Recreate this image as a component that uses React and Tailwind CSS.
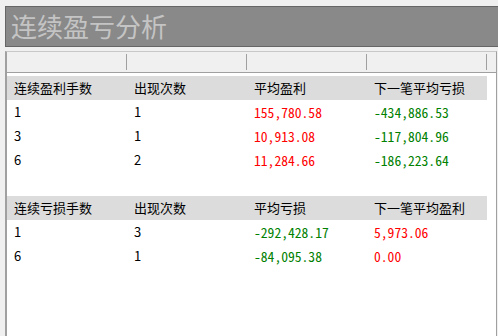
const winRows = [
  ["1", "1", "155,780.58", "-434,886.53"],
  ["3", "1", "10,913.08", "-117,804.96"],
  ["6", "2", "11,284.66", "-186,223.64"],
];

const lossRows = [
  ["1", "3", "-292,428.17", "5,973.06"],
  ["6", "1", "-84,095.38", "0.00"],
];

const cjk = "font-['Noto_Sans_CJK_SC',sans-serif]";
const mono = "font-['Noto_Sans_Mono_CJK_SC','Liberation_Mono',monospace] text-[13.6px]";

function GroupHeader({ labels }) {
  return (
    <div className="flex h-[24px] w-[480px] items-center bg-[#dcdcdc] text-[13px] text-black">
      {labels.map((l) => (
        <div key={l} className={`w-[120px] pl-[7px] ${cjk}`}>
          {l}
        </div>
      ))}
    </div>
  );
}

function Row({ cells, colors }) {
  return (
    <div className="flex h-[24px] w-[480px] items-center text-[13px]">
      {cells.map((c, i) => (
        <div key={i} className={`w-[120px] pl-[7px] ${colors[i]} ${i < 2 ? cjk : mono}`}>
          {c}
        </div>
      ))}
    </div>
  );
}

export default function App() {
  return (
    <div className="flex h-[336px] w-[498px] flex-col overflow-hidden bg-[#f0f0f0] pl-[5px] pt-[6px]">
      <div
        className={`h-[41px] shrink-0 border border-r-0 border-[#666666] bg-[#898989] pl-[5px] text-[26px] leading-[38px] text-[#c4c4c4] ${cjk}`}
      >
        连续盈亏分析
      </div>

      <div className="mr-[1px] mt-[4px] flex-1 border-l-2 border-r border-t border-l-[#a0a0a0] border-r-[#a0a0a0] border-t-[#c8c8c8] bg-white">
        {/* column header strip */}
        <div className="flex h-[21px] border-b border-[#a0a0a0] bg-[#f0f0f0]">
          {[0, 1, 2, 3].map((i) => (
            <div key={i} className="flex w-[120px] justify-end py-[2px]">
              <div className="h-full w-px bg-[#a0a0a0]" />
            </div>
          ))}
        </div>

        <div className="pt-[3px]">
          <GroupHeader labels={["连续盈利手数", "出现次数", "平均盈利", "下一笔平均亏损"]} />
          {winRows.map((r) => (
            <Row key={r[0]} cells={r} colors={["text-black", "text-black", "text-[#ff0000]", "text-[#008000]"]} />
          ))}
          <div className="h-[24px]" />
          <GroupHeader labels={["连续亏损手数", "出现次数", "平均亏损", "下一笔平均盈利"]} />
          {lossRows.map((r) => (
            <Row key={r[0]} cells={r} colors={["text-black", "text-black", "text-[#008000]", "text-[#ff0000]"]} />
          ))}
        </div>
      </div>
    </div>
  );
}
